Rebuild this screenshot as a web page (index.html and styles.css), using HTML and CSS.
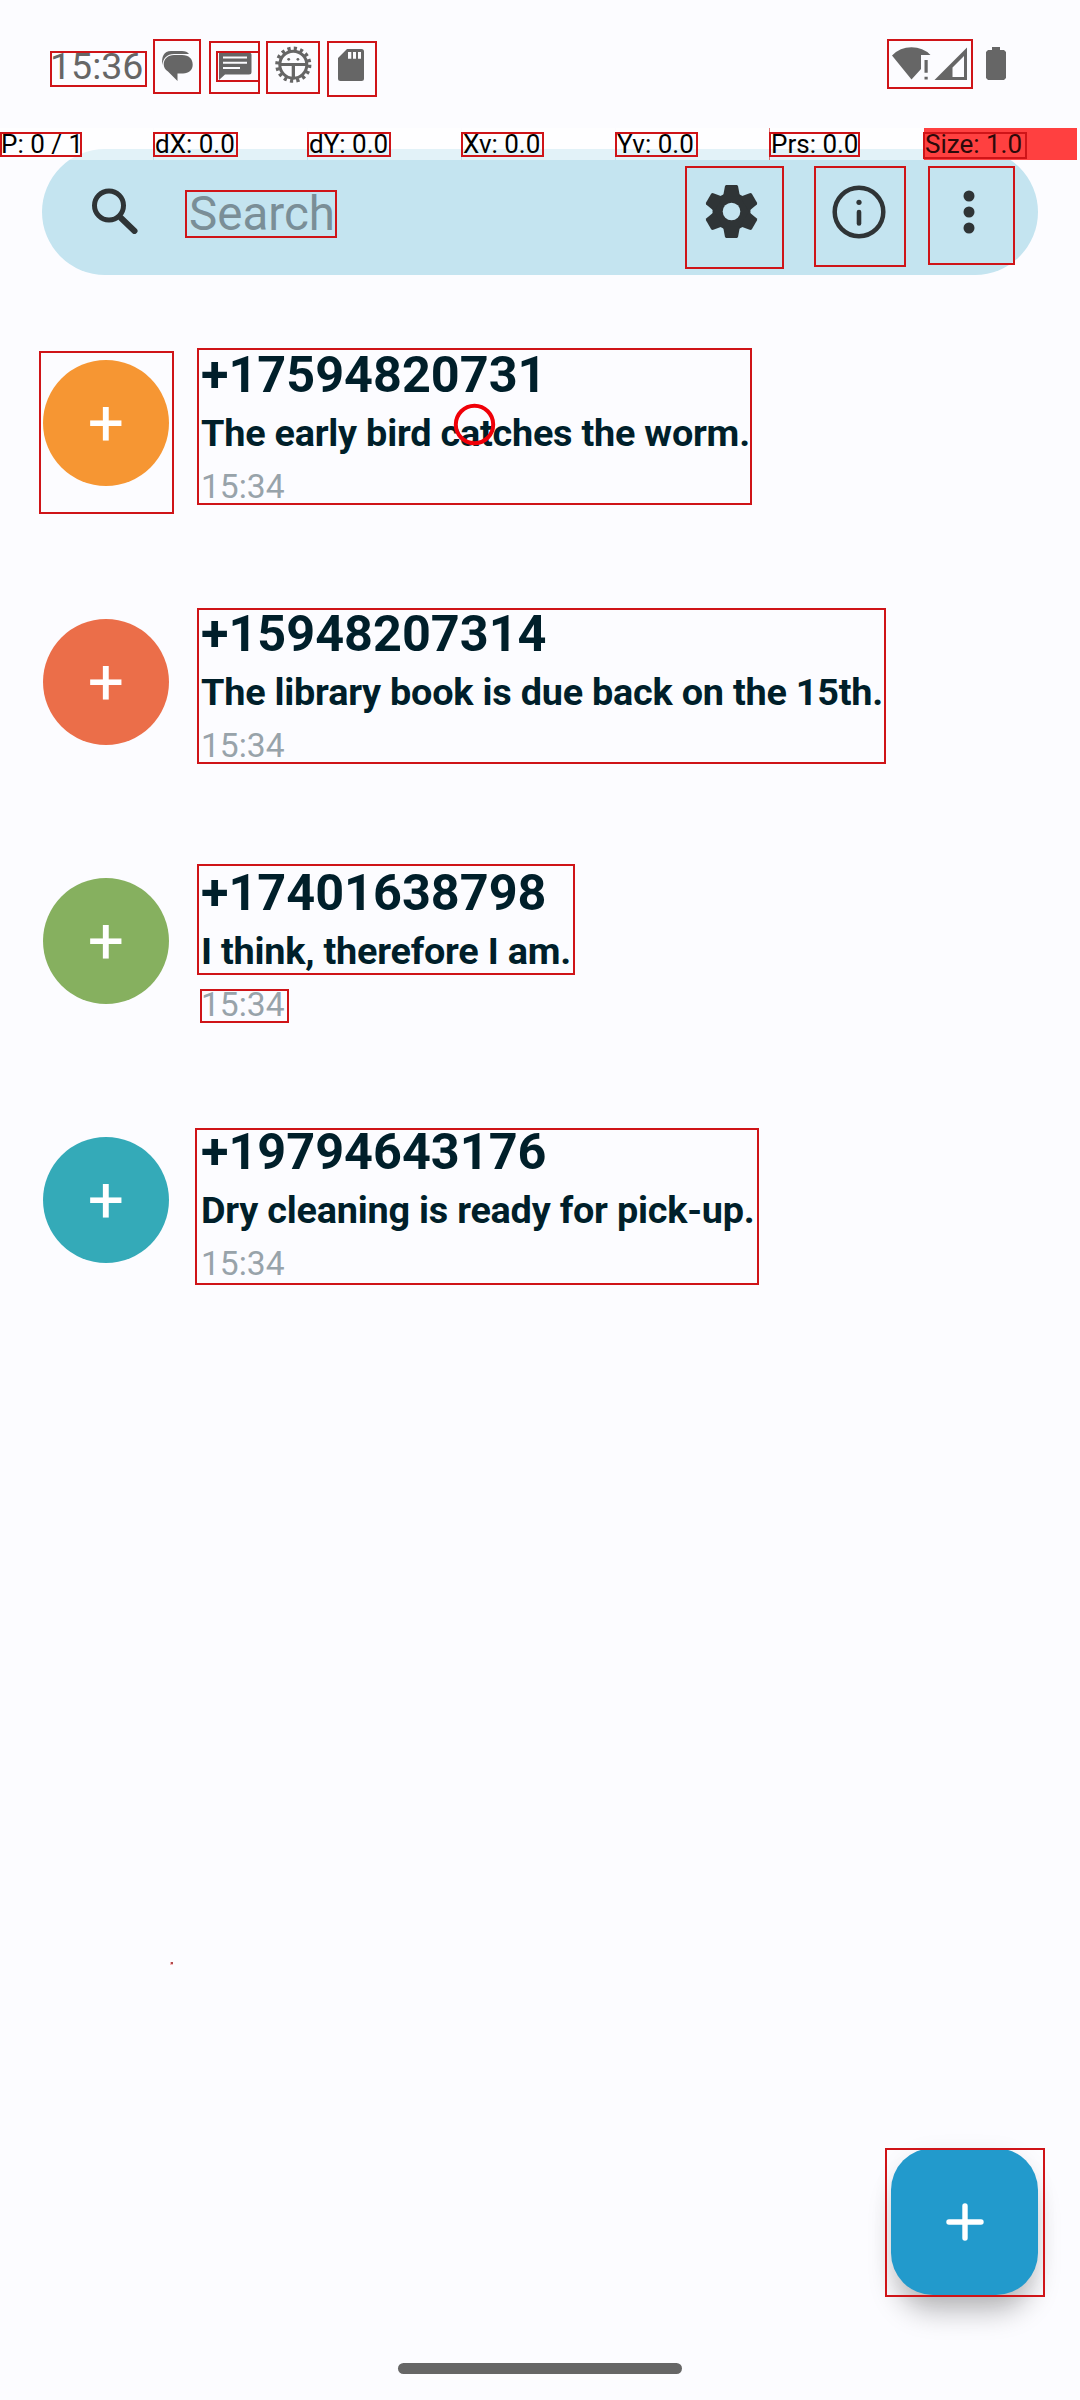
FILE: index.html
```html
<!DOCTYPE html>
<html lang="en">
<head>
<meta charset="utf-8">
<title>Messages</title>
<link rel="stylesheet" href="styles.css">
</head>
<body>
<div class="screen">
  <header class="status">
    <span class="clock">15:36</span>
    <svg class="icon-chat" viewBox="153 39 48 55" width="48" height="55"><path d="M162.500 65C161 57 164 51 171 51H182Q187 51 189 54H174C167 54 163 58 162.500 65Z"/><path d="M174 55H182C189 55 192.700 59 192.700 64.500S189 73.500 183 73.500H177.500V81L168 71.500C165 69.500 163.700 67 163.700 64.500C163.700 59 168 55 174 55Z"/></svg>
    <svg class="icon-sms" viewBox="209 41 51 53" width="51" height="53"><path fill-rule="evenodd" d="M219 52.500H249Q251.500 52.500 251.500 55V72Q251.500 74.500 249 74.500H225L219 80ZM223 56.500V58.500H247V56.500ZM223 61.800V63.800H247V61.800ZM223 67V69H240V67Z"/></svg>
    <svg class="icon-bug" viewBox="266 41 54 53" width="54" height="53"><circle cx="293.300" cy="64.700" r="13.500" fill="none" stroke="#666" stroke-width="3"/><circle cx="293.300" cy="64.700" r="16.200" fill="none" stroke="#666" stroke-width="3.800" stroke-dasharray="3.180 3.180" /><path d="M280 63H307V66H295V78H291.700V66H280Z"/><circle cx="288.700" cy="59.300" r="1.400"/><circle cx="297.900" cy="59.300" r="1.400"/></svg>
    <svg class="icon-sd" viewBox="327 41 50 56" width="50" height="56"><path fill-rule="evenodd" d="M347 49H361.500Q364 49 364 51.500V78.500Q364 81 361.500 81H340.500Q338 81 338 78.500V58ZM348 52V58.700H351.300V52ZM353 52V58.700H356V52ZM358 52V58.700H361V52Z"/></svg>
    <svg class="icon-net" viewBox="887 39 86 50" width="86" height="50"><path d="M892 55.500Q900 47.300 911.500 47.300T930.500 55H921V69L911.500 79.500Z"/><path d="M924.500 60H927.700V72.700H924.500ZM924.500 76.700H927.700V79.600H924.500Z"/><path fill-rule="evenodd" d="M934.500 80L967 47.500V80ZM952.500 67.500V77H964V56Z"/></svg>
    <svg class="icon-bat" viewBox="986 47 20 33" width="20" height="33"><path d="M992 47H1000V50H1004L1006 52V78L1004 80H988L986 78V52L988 50H992Z"/></svg>
  </header>

  <div class="search">
    <svg class="icon-find" viewBox="92 188 46 46" width="46" height="46"><circle cx="109" cy="205.500" r="14.500" fill="none" stroke="#2f3436" stroke-width="5"/><path d="M121 218L134.500 231" stroke="#2f3436" stroke-width="6" stroke-linecap="round"/></svg>
    <span class="hint">Search</span>
    <svg class="icon-gear" viewBox="-31.500 -31.500 63 63" width="63" height="63"><g fill="#2f3436"><circle r="19"/><path id="tooth" d="M-5.500 -26.500H5.500L6.500 -25.500L8.500 -15H-8.500L-6.500 -25.500Z"/><use href="#tooth" transform="rotate(60)"/><use href="#tooth" transform="rotate(120)"/><use href="#tooth" transform="rotate(180)"/><use href="#tooth" transform="rotate(240)"/><use href="#tooth" transform="rotate(300)"/></g><circle r="8.800" fill="#c4e4f0"/></svg>
    <svg class="icon-info" viewBox="-27 -27 54 54" width="54" height="54"><circle r="24.300" fill="none" stroke="#2f3436" stroke-width="4.500"/><circle cy="-9.700" r="2.600" fill="#2f3436"/><path d="M0 0V11.500" stroke="#2f3436" stroke-width="4.600" stroke-linecap="round"/></svg>
    <svg class="icon-more" viewBox="-6 -22 12 44" width="12" height="44"><g fill="#2f3436"><circle cy="-16" r="5.500"/><circle r="5.500"/><circle cy="16" r="5.500"/></g></svg>
  </div>

  <main class="list">
    <article class="row"><div class="avatar orange">+</div><div class="body"><div class="number">+17594820731</div><div class="text">The early bird catches the worm.</div><div class="time">15:34</div></div></article>
    <article class="row"><div class="avatar coral">+</div><div class="body"><div class="number">+15948207314</div><div class="text">The library book is due back on the 15th.</div><div class="time">15:34</div></div></article>
    <article class="row"><div class="avatar green">+</div><div class="body"><div class="number">+17401638798</div><div class="text">I think, therefore I am.</div><div class="time">15:34</div></div></article>
    <article class="row"><div class="avatar teal">+</div><div class="body"><div class="number">+19794643176</div><div class="text">Dry cleaning is ready for pick-up.</div><div class="time">15:34</div></div></article>
  </main>

  <footer class="bottom">
    <div class="fab"><svg viewBox="0 0 38 38" width="38" height="38"><path d="M19 3V35M3 19H35" stroke="#fff" stroke-width="5.400" stroke-linecap="round"/></svg></div>
    <div class="home"></div>
  </footer>

  <div class="pointer-bar">
    <span>P: 0 / 1</span><span>dX: 0.0</span><span>dY: 0.0</span><span>Xv: 0.0</span><span>Yv: 0.0</span><span class="prs">Prs: 0.0</span><span class="size">Size: 1.0</span>
  </div>

  <svg class="marks" viewBox="0 0 1080 2400" width="1080" height="2400">
    <g class="line">
      <path d="M51 52H146V86H51ZM154 40H200V93H154ZM210 42H259V93H210ZM217 52H259V81H217ZM267 42H319V93H267ZM328 42H376V96H328ZM888 40H972V88H888Z"/>
      <path d="M1 133H81V156H1ZM154 133H237V156H154ZM308 133H390V156H308ZM462 133H543V156H462ZM616 133H697V156H616ZM770 133H859V156H770ZM924 133H1026V158H924Z"/>
      <path d="M186 191H336V237H186ZM686 167H783V268H686ZM815 167H905V266H815ZM929 167H1014V264H929Z"/>
      <path d="M40 352H173V513H40ZM198 349H751V504H198ZM198 609H885V763H198ZM198 865H574V974H198ZM201 990H288V1022H201ZM196 1129H758V1284H196ZM886 2149H1044V2296H886Z"/>
    </g>
    <circle class="touch" cx="474.500" cy="424.500" r="18.700"/>
    <rect x="170" y="1962" width="3" height="3" fill="#f6b9bb"/><rect x="171" y="1962" width="2" height="2" fill="#b04a4c"/>
  </svg>
</div>
</body>
</html>
```
FILE: styles.css
```css
* { box-sizing: border-box; }
body { margin: 0; background: #fcfcff; font-family: Roboto, sans-serif; }
.screen { position: relative; width: 1080px; height: 2400px; overflow: hidden; display: flex; flex-direction: column; }
svg { display: block; flex: none; }

.status { height: 149px; flex: none; display: flex; align-items: flex-start; padding-left: 50px; fill: #666; }
.clock { width: 103px; padding-top: 44px; font-size: 37.500px; line-height: 44px; color: #666; }
.icon-chat { margin-top: 39px; }
.icon-sms { margin: 41px 0 0 8px; }
.icon-bug { margin: 41px 0 0 6px; }
.icon-sd { margin: 41px 0 0 7px; }
.icon-net { margin: 39px 0 0 510px; }
.icon-bat { margin: 47px 0 0 13px; }

.search { flex: none; height: 126px; margin: 0 42px; padding-left: 50px; border-radius: 63px; background: #c4e4f0; display: flex; align-items: center; }
.icon-find { margin-top: -3px; }
.hint { width: 562px; padding: 3px 0 0 51px; font-size: 47.500px; line-height: 56px; color: #7a8e97; }
.icon-info { margin-left: 69px; }
.icon-more { margin-left: 77px; }
.icon-gear, .icon-info { margin-top: -1px; }

.list { margin-top: 73px; flex: 1; }
.row { height: 259px; display: flex; padding-left: 43px; }
.avatar { flex: none; width: 126px; height: 126px; margin: 12px 32px 0 0; border-radius: 50%; color: #fff; font-size: 64px; line-height: 128px; text-align: center; }
.orange { background: #f69633; }
.coral { background: #eb6e49; }
.green { background: #86b05f; }
.teal { background: #34aab8; }
.number { font-size: 50.400px; line-height: 54px; font-weight: 700; color: #001f2a; white-space: nowrap; }
.text { font-size: 37.800px; line-height: 62px; font-weight: 700; letter-spacing: -0.220px; color: #001f2a; white-space: nowrap; }
.time { font-size: 33.600px; line-height: 46px; color: #98a3aa; }

.bottom { flex: none; height: 252px; display: flex; flex-direction: column; align-items: center; justify-content: space-between; padding-bottom: 26px; }
.fab { align-self: flex-end; width: 147px; height: 147px; margin-right: 42px; border-radius: 42px; background: #229acc; display: flex; align-items: center; justify-content: center; box-shadow: 0 22px 28px -6px rgba(0,0,0,.27), 0 2px 22px rgba(0,0,0,.05); }
.home { width: 284px; height: 11px; border-radius: 6px; background: #666; }

.pointer-bar { position: absolute; left: 0; top: 128px; display: grid; grid-template-columns: repeat(7, 153px); column-gap: 1px; font-size: 26px; line-height: 32px; color: #000; }
.pointer-bar span { height: 32px; padding-left: 1px; background: rgba(255,255,255,.5); white-space: nowrap; }
.pointer-bar .prs { box-shadow: -1px 0 #d77; }
.pointer-bar .size { background: #ff4040; color: #2c0a0a; }

.marks { position: absolute; left: 0; top: 0; fill: none; }
.line { stroke: #cf1418; stroke-width: 2; }
.touch { stroke: #f00008; stroke-width: 4; }
```
